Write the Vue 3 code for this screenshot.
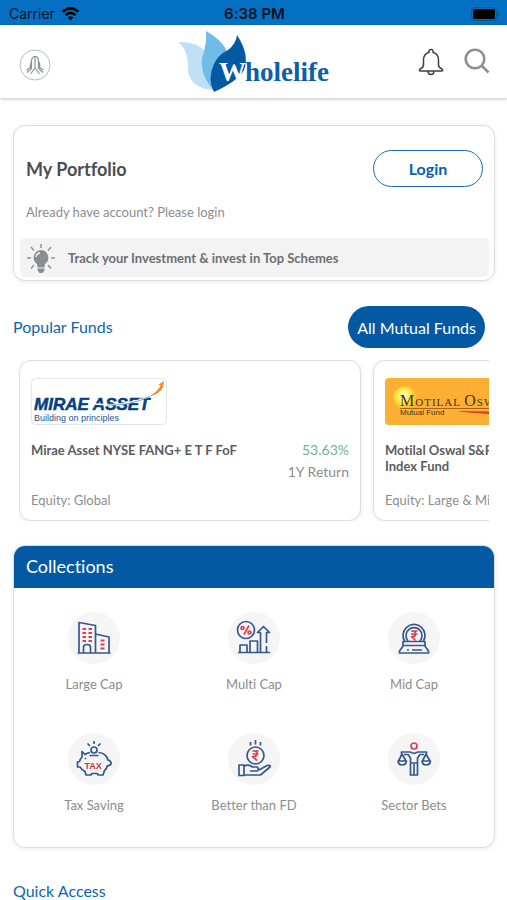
<script setup>
const funds = [
  { id: 'mirae', name: 'Mirae Asset NYSE FANG+ E T F FoF', type: 'Equity: Global', value: '53.63%', period: '1Y Return' },
  { id: 'motilal', name: 'Motilal Oswal S&P 500 Index Fund', type: 'Equity: Large & MidCap', value: '35.12%', period: '1Y Return' },
]

const collections = [
  { id: 'large', label: 'Large Cap' },
  { id: 'multi', label: 'Multi Cap' },
  { id: 'mid', label: 'Mid Cap' },
  { id: 'tax', label: 'Tax Saving' },
  { id: 'fd', label: 'Better than FD' },
  { id: 'sector', label: 'Sector Bets' },
]
</script>

<template>
  <div class="screen">
    <div class="status">
      <div class="carrier">
        <span>Carrier</span>
        <svg class="wifi" viewBox="0 0 20 15" aria-hidden="true">
          <path d="M1.5 5.2Q10-2.2 18.5 5.2" />
          <path d="M4.6 8.6Q10 4 15.4 8.6" />
          <path class="solid" d="M7 11.2Q10 8.4 13 11.2L10 14.4Z" />
        </svg>
      </div>
      <strong>6:38 PM</strong>
      <div class="power">
        <svg class="battery" viewBox="0 0 29 14" aria-hidden="true">
          <rect class="shell" x="0.5" y="0.5" width="25" height="13" rx="4" />
          <rect x="2" y="2" width="22" height="10" rx="2.5" />
          <path class="cap" d="M27 4.5Q29.5 7 27 9.5Z" />
        </svg>
      </div>
    </div>

    <header class="topbar">
      <button class="icon-btn start" aria-label="Menu">
        <svg class="namaste" viewBox="0 0 32 32" aria-hidden="true">
          <circle cx="16" cy="16" r="15" />
          <path d="M12.5 19V11.5Q13 8 15.5 7.5H17Q19.300 8 19.500 11.500V19M16 7.500V19M12.500 12Q11 16 11.500 18.500L7.500 21M19.500 12Q21.500 16 20.500 18.500L24.500 21M13 19L8 23.500M19 19L24 23.500M16 19L11.500 25M16 19L20.500 25" />
        </svg>
      </button>
      <a class="brand" href="#" aria-label="Wholelife home">
        <svg viewBox="0 0 154 64" aria-hidden="true">
          <path class="leaf-pale" d="M0 12Q23 12 28 24Q26 46 36 60Q14 59 10 42Q11 20 0 12Z" />
          <path class="leaf-mid" d="M28 1Q49 13 50 27Q37 40 36 61Q22 45 24 28Q29 14 28 1Z" />
          <path class="leaf-dark" d="M59 5Q72 25 66 40Q60 51 36 62Q29 49 36 34Q40 25 50 20Q58 14 59 5Z" />
          <text class="w-light" x="41" y="51">W</text>
          <text class="word" x="67" y="51">holelife</text>
        </svg>
      </a>
      <div class="actions">
        <button class="icon-btn" aria-label="Notifications">
          <svg class="bell" viewBox="0 0 26 28" aria-hidden="true">
            <path d="M11 4.200Q10.500 1.500 13 1.500T15 4.200Q20.500 6 20.500 12V17Q20.500 19.500 24 21Q25.500 23 23.500 23H2.500Q0.500 23 2 21Q5.500 19.500 5.500 17V12Q5.500 6 11 4.200ZM10 23Q10 26.500 13 26.500T16 23" />
          </svg>
        </button>
        <button class="icon-btn" aria-label="Search">
          <svg class="search" viewBox="0 0 26 27" aria-hidden="true">
            <circle cx="11" cy="11" r="9.300" /><path d="M17.500 17.500L24.500 24.500" />
          </svg>
        </button>
      </div>
    </header>

    <main class="content">
      <section class="panel portfolio">
        <div class="portfolio-head">
          <h1>My Portfolio</h1>
          <button class="login">Login</button>
        </div>
        <p class="hint">Already have account? Please login</p>
        <div class="tip">
          <svg class="bulb" viewBox="0 0 30 30" aria-hidden="true">
            <path class="rays" d="M15 1V5M5 4L8 7.500M25 4L22 7.500M1 15H5M25 15H29M5 25.500L8 22M25 25.500L22 22" />
            <path class="glass" d="M15 7A7.700 7.700 0 0 1 19 21L18.500 24.500H11.500L11 21A7.700 7.700 0 0 1 15 7ZM11.500 25.500H18.500V27.500L16.500 30H13.500L11.500 27.500Z" />
            <path class="glint" d="M10 14Q10.500 10.500 14 9.700" />
          </svg>
          <span>Track your Investment &amp; invest in Top Schemes</span>
        </div>
      </section>

      <section>
        <div class="funds-head">
          <h2>Popular Funds</h2>
          <button class="all">All Mutual Funds</button>
        </div>
        <div class="funds">
          <article v-for="f in funds" :key="f.id" class="panel fund">
            <svg v-if="f.id === 'mirae'" class="fund-logo" viewBox="0 0 136 47" aria-hidden="true">
              <rect class="logo-frame" x="0.500" y="0.500" width="135" height="46" rx="4" />
              <text class="mirae" x="3" y="32">MIRAE ASSET</text>
              <path class="swoosh-white" d="M64 26Q92 29 117 19" />
              <path class="swoosh-blue" d="M76 27Q100 28 119 18" />
              <path class="flame" d="M119 18Q127 13 130 7L127 7L133 3L132 9Q129 16 119 18Z" />
              <text class="principles" x="3" y="43">Building on principles</text>
            </svg>
            <svg v-else class="fund-logo" viewBox="0 0 136 47" aria-hidden="true">
              <defs>
                <radialGradient id="sun" cx="0.45" cy="0.4">
                  <stop offset="0" stop-color="#fffde0" /><stop offset="0.5" stop-color="#fff04f" /><stop offset="1" stop-color="#f9c22c" />
                </radialGradient>
              </defs>
              <rect class="gold" width="136" height="47" rx="4" />
              <circle cx="20" cy="20" r="11.500" fill="url(#sun)" />
              <text class="motilal" x="15" y="28"><tspan class="big">M</tspan>OTILAL <tspan class="big">O</tspan>SWAL</text>
              <path class="rule" d="M15 30.500H130" />
              <path class="red" d="M72 33L130 34V37Q92 36 72 33Z" />
              <text class="mutual" x="15" y="37">Mutual Fund</text>
            </svg>
            <div class="fund-info">
              <h3>{{ f.name }}</h3>
              <div class="returns"><span class="gain">{{ f.value }}</span><span>{{ f.period }}</span></div>
            </div>
            <p class="fund-type">{{ f.type }}</p>
          </article>
        </div>
      </section>

      <section class="panel collections">
        <h2>Collections</h2>
        <div class="grid">
          <a v-for="c in collections" :key="c.id" href="#" class="item">
            <span class="disc">
              <svg viewBox="0 0 36 36" aria-hidden="true">
                <g v-if="c.id === 'large'">
                  <path d="M3 33V2.500L19.500 5.500V33M19.500 14L33 17V33M1.500 33H34.500M7.500 33V27Q7.500 24.500 11 24.500T14.500 27V33" />
                  <path class="r thick" d="M6.500 9H10M12.500 9H16M6.500 13H10M12.500 13H16M6.500 17H10M12.500 17H16M6.500 21H10M12.500 21H16M24.500 20.500H28.500M24.500 24.500H28.500M24.500 28.500H28.500" />
                </g>
                <g v-else-if="c.id === 'multi'">
                  <circle cx="10" cy="10" r="8.500" />
                  <path d="M2 32.500H34M4 32.500V25H11V32.500M14 32.500V21H21.500V32.500M24.500 32.500V12.500H21.500L27.500 6.500L33.500 12.500H30.500V23M30.500 26V32.500" />
                  <path class="r" d="M13 5.500L8 14.500" /><circle class="r" cx="6.500" cy="8" r="1.500" /><circle class="r" cx="13.500" cy="12.500" r="1.500" />
                </g>
                <g v-else-if="c.id === 'mid'">
                  <path d="M8.500 21A11 11 0 1 1 27.500 21M12 21A8 8 0 1 1 24 21M7 21.500H29V25.500H7ZM7.500 25.500L3.500 31V33H32.500V31L28.500 25.500M11 30H13M16 30H26" />
                  <path class="r" d="M15 11H21.500M15 14H21.500M16 11Q20 11 19.500 14T15.500 16.500L19.500 20.500" />
                </g>
                <g v-else-if="c.id === 'tax'">
                  <path d="M14 11.500Q11 12 9 13.500L6 10.500V16Q4 18 3.500 20.500L1.500 21V26H4Q6 29 9 30.500L10 34H15L15.500 32.500H21.500L22 34H27L28.500 29.500Q31 27.500 31.500 24.500Q34.500 25 35 22.500T32 19Q30 12 22.500 11.500M13.500 14.500H22.500M9 18L10 17" />
                  <circle cx="18" cy="9" r="3" /><path d="M18 0V3M11.500 2.500L14 5M24.500 2.500L22 5" />
                  <text class="tax" x="8.500" y="27.500">TAX</text>
                </g>
                <g v-else-if="c.id === 'fd'">
                  <circle cx="19.500" cy="14.500" r="8.500" />
                  <path d="M19.500 -1V3.500M14.500 1V4.500M24.500 1V4.500M3 24H8V34.500H3ZM8 25Q13 23 16.500 26H21Q24 28.500 21 30H14M23 29L31 24.500Q35 24 34 26L24.500 34H8" />
                  <path class="r" d="M16.500 10H22.500M16.500 13H22.500M17.500 10Q21.500 10 21 13T16.500 15.500L21 19.500" />
                </g>
                <g v-else>
                  <circle class="r" cx="18" cy="5" r="3" />
                  <path d="M5.500 13V11H14L18 12.500L22 11H30.500V13M8 13.500H12L14.500 17V34H21.500V17L24 13.500H28M14.500 22H21.500M18 23V34M6 13L2.500 20M6 13L10 20M2 20H10.500Q10 24 6.200 24T2 20ZM30 13L26.500 20M30 13L34 20M26 20H34.500Q34 24 30.200 24T26 20Z" />
                </g>
              </svg>
            </span>
            <span>{{ c.label }}</span>
          </a>
        </div>
      </section>

      <h2 class="quick">Quick Access</h2>
    </main>
  </div>
</template>

<style>
body { margin: 0; background: #fff; }
</style>

<style scoped>
.screen { font-family: Lato, "Liberation Sans", sans-serif; font-variant-ligatures: none; color: #8b8d8e; font-size: 14px; background: #fff; overflow: hidden; }
h1, h2, h3, p { margin: 0; }
button { font-family: inherit; cursor: pointer; margin: 0; }
a { color: inherit; text-decoration: none; }
svg { display: block; }
.status { height: 25px; padding: 2px 7px 0 9px; box-sizing: border-box; display: grid; grid-template-columns: 1fr auto 1fr; align-items: center; background: #0470c4; color: #06121f; font-family: Inter, sans-serif; font-size: 14px; }
.status strong { font-size: 15px; font-weight: 600; }
.carrier { display: flex; align-items: center; gap: 6px; }
.wifi { width: 19px; height: 14px; fill: none; stroke: #000; stroke-width: 2.800; }
.wifi .solid { fill: #000; stroke: none; }
.power { display: flex; justify-content: flex-end; }
.battery { width: 29px; height: 14px; }
.battery .shell { fill: none; stroke: #07518b; }
.battery .cap { fill: #07518b; }
.topbar { height: 73px; padding: 0 17px 0 19px; box-sizing: border-box; display: grid; grid-template-columns: 1fr auto 1fr; align-items: center; box-shadow: 0 1px 3px rgba(0, 0, 0, 0.25); }
.icon-btn { padding: 0; border: 0; background: none; }
.start { justify-self: start; margin-top: 6px; }
.namaste { width: 32px; height: 32px; fill: none; stroke: #8f9294; stroke-width: 1.200; }
.namaste circle { stroke: #b9bcbd; stroke-width: 1; }
.brand svg { width: 154px; height: 64px; }
.leaf-pale { fill: #bfe0f6; }
.leaf-mid { fill: #70bce8; }
.leaf-dark { fill: #0459a3; }
.word, .w-light { font: bold 27px "Liberation Serif", serif; fill: #0c5fa8; }
.w-light { fill: #fff; }
.actions { display: flex; justify-content: flex-end; align-items: center; gap: 20px; }
.bell { width: 26px; height: 28px; fill: none; stroke: #3f4142; stroke-width: 1.500; }
.search { width: 26px; height: 27px; fill: none; stroke: #8d8f90; stroke-width: 2.600; }
.content { padding: 27px 12px 0 13px; }
.panel { background: #fff; border: 1px solid #dcdddd; border-radius: 12px; box-shadow: 0 1px 5px rgba(0, 0, 0, 0.08); }
.portfolio { padding: 24px 5px 3px 6px; }
.portfolio-head { display: flex; justify-content: space-between; align-items: center; padding: 0 6px; }
h1 { font-size: 18px; line-height: 24px; color: #4c4d4f; }
.login { width: 110px; height: 37px; border: 1px solid #1c6db0; border-radius: 19px; background: #fff; color: #0560a8; font-size: 16px; font-weight: 700; }
.hint { margin: 15px 6px 16px; font-size: 13px; line-height: 20px; }
.tip { display: flex; align-items: center; gap: 12px; height: 39px; padding-left: 6px; border-radius: 5px; background: #f3f3f3; font-weight: 700; font-size: 13px; color: #6e6f71; }
.bulb { width: 30px; height: 30px; }
.rays { fill: none; stroke: #919394; stroke-width: 1.500; }
.glass { fill: #8b8d8e; }
.glint { fill: none; stroke: #f3f3f3; stroke-width: 1.500; }
.funds-head { display: flex; justify-content: space-between; align-items: center; margin: 25px 10px 12px 0; }
h2 { font-size: 16px; line-height: 18px; font-weight: 400; color: #0b67ad; }
.all { height: 42px; padding: 0 9px; border: 0; border-radius: 21px; background: #035aa3; color: #fff; font-size: 16px; }
.funds { display: flex; gap: 12px; margin: 0 6px; overflow: hidden; }
.fund { flex: 0 0 342px; box-sizing: border-box; padding: 17px 11px 11px; }
.fund-logo { width: 136px; height: 47px; }
.logo-frame { fill: #fff; stroke: #e4e5e6; }
.mirae { font: italic bold 17px "Liberation Sans", sans-serif; fill: #063f80; stroke: #063f80; stroke-width: 0.500; }
.principles { font: 9px "Liberation Sans", sans-serif; fill: #1e5595; }
.swoosh-white { fill: none; stroke: #fff; stroke-width: 1.500; }
.swoosh-blue { fill: none; stroke: #7ba3c9; stroke-width: 1; }
.flame { fill: #f18a20; }
.gold { fill: #fbb034; }
.motilal { font: 11px "Liberation Serif", serif; fill: #4a3519; letter-spacing: 1px; }
.motilal .big { font-size: 16px; }
.mutual { font: 8px "Liberation Sans", sans-serif; fill: #4a3519; }
.rule { stroke: #8b3b1a; stroke-width: 0.700; }
.red { fill: #dc3b20; }
.fund-info { display: flex; justify-content: space-between; gap: 12px; height: 50px; margin-top: 17px; }
h3 { font-size: 13px; line-height: 16px; color: #5b5c5e; }
.fund:nth-child(2) h3 { max-width: 150px; }
.returns { flex: none; display: flex; flex-direction: column; gap: 6px; text-align: right; line-height: 16px; }
.gain { color: #6bb592; }
.fund-type { font-size: 13px; line-height: 17px; }
.collections { margin-top: 24px; overflow: hidden; }
.collections h2 { margin: -1px -1px 0; padding: 0 13px; line-height: 43px; font-size: 18px; background: #035aa3; color: #fff; }
.grid { display: grid; grid-template-columns: repeat(3, 1fr); row-gap: 39px; padding: 24px 0 32px; }
.item { display: flex; flex-direction: column; align-items: center; gap: 10px; font-size: 13px; line-height: 20px; }
.disc { display: grid; place-items: center; width: 52px; height: 52px; border-radius: 50%; background: #f5f5f5; }
.disc svg { width: 36px; height: 36px; fill: none; stroke: #34588d; stroke-width: 1.700; stroke-linejoin: round; overflow: visible; }
.disc .r { stroke: #d8424e; }
.disc .thick { stroke-width: 2; }
.tax { font: bold 9px "Liberation Sans", sans-serif; fill: #d22f3b; stroke: none; }
.quick { margin-top: 34px; }
</style>
